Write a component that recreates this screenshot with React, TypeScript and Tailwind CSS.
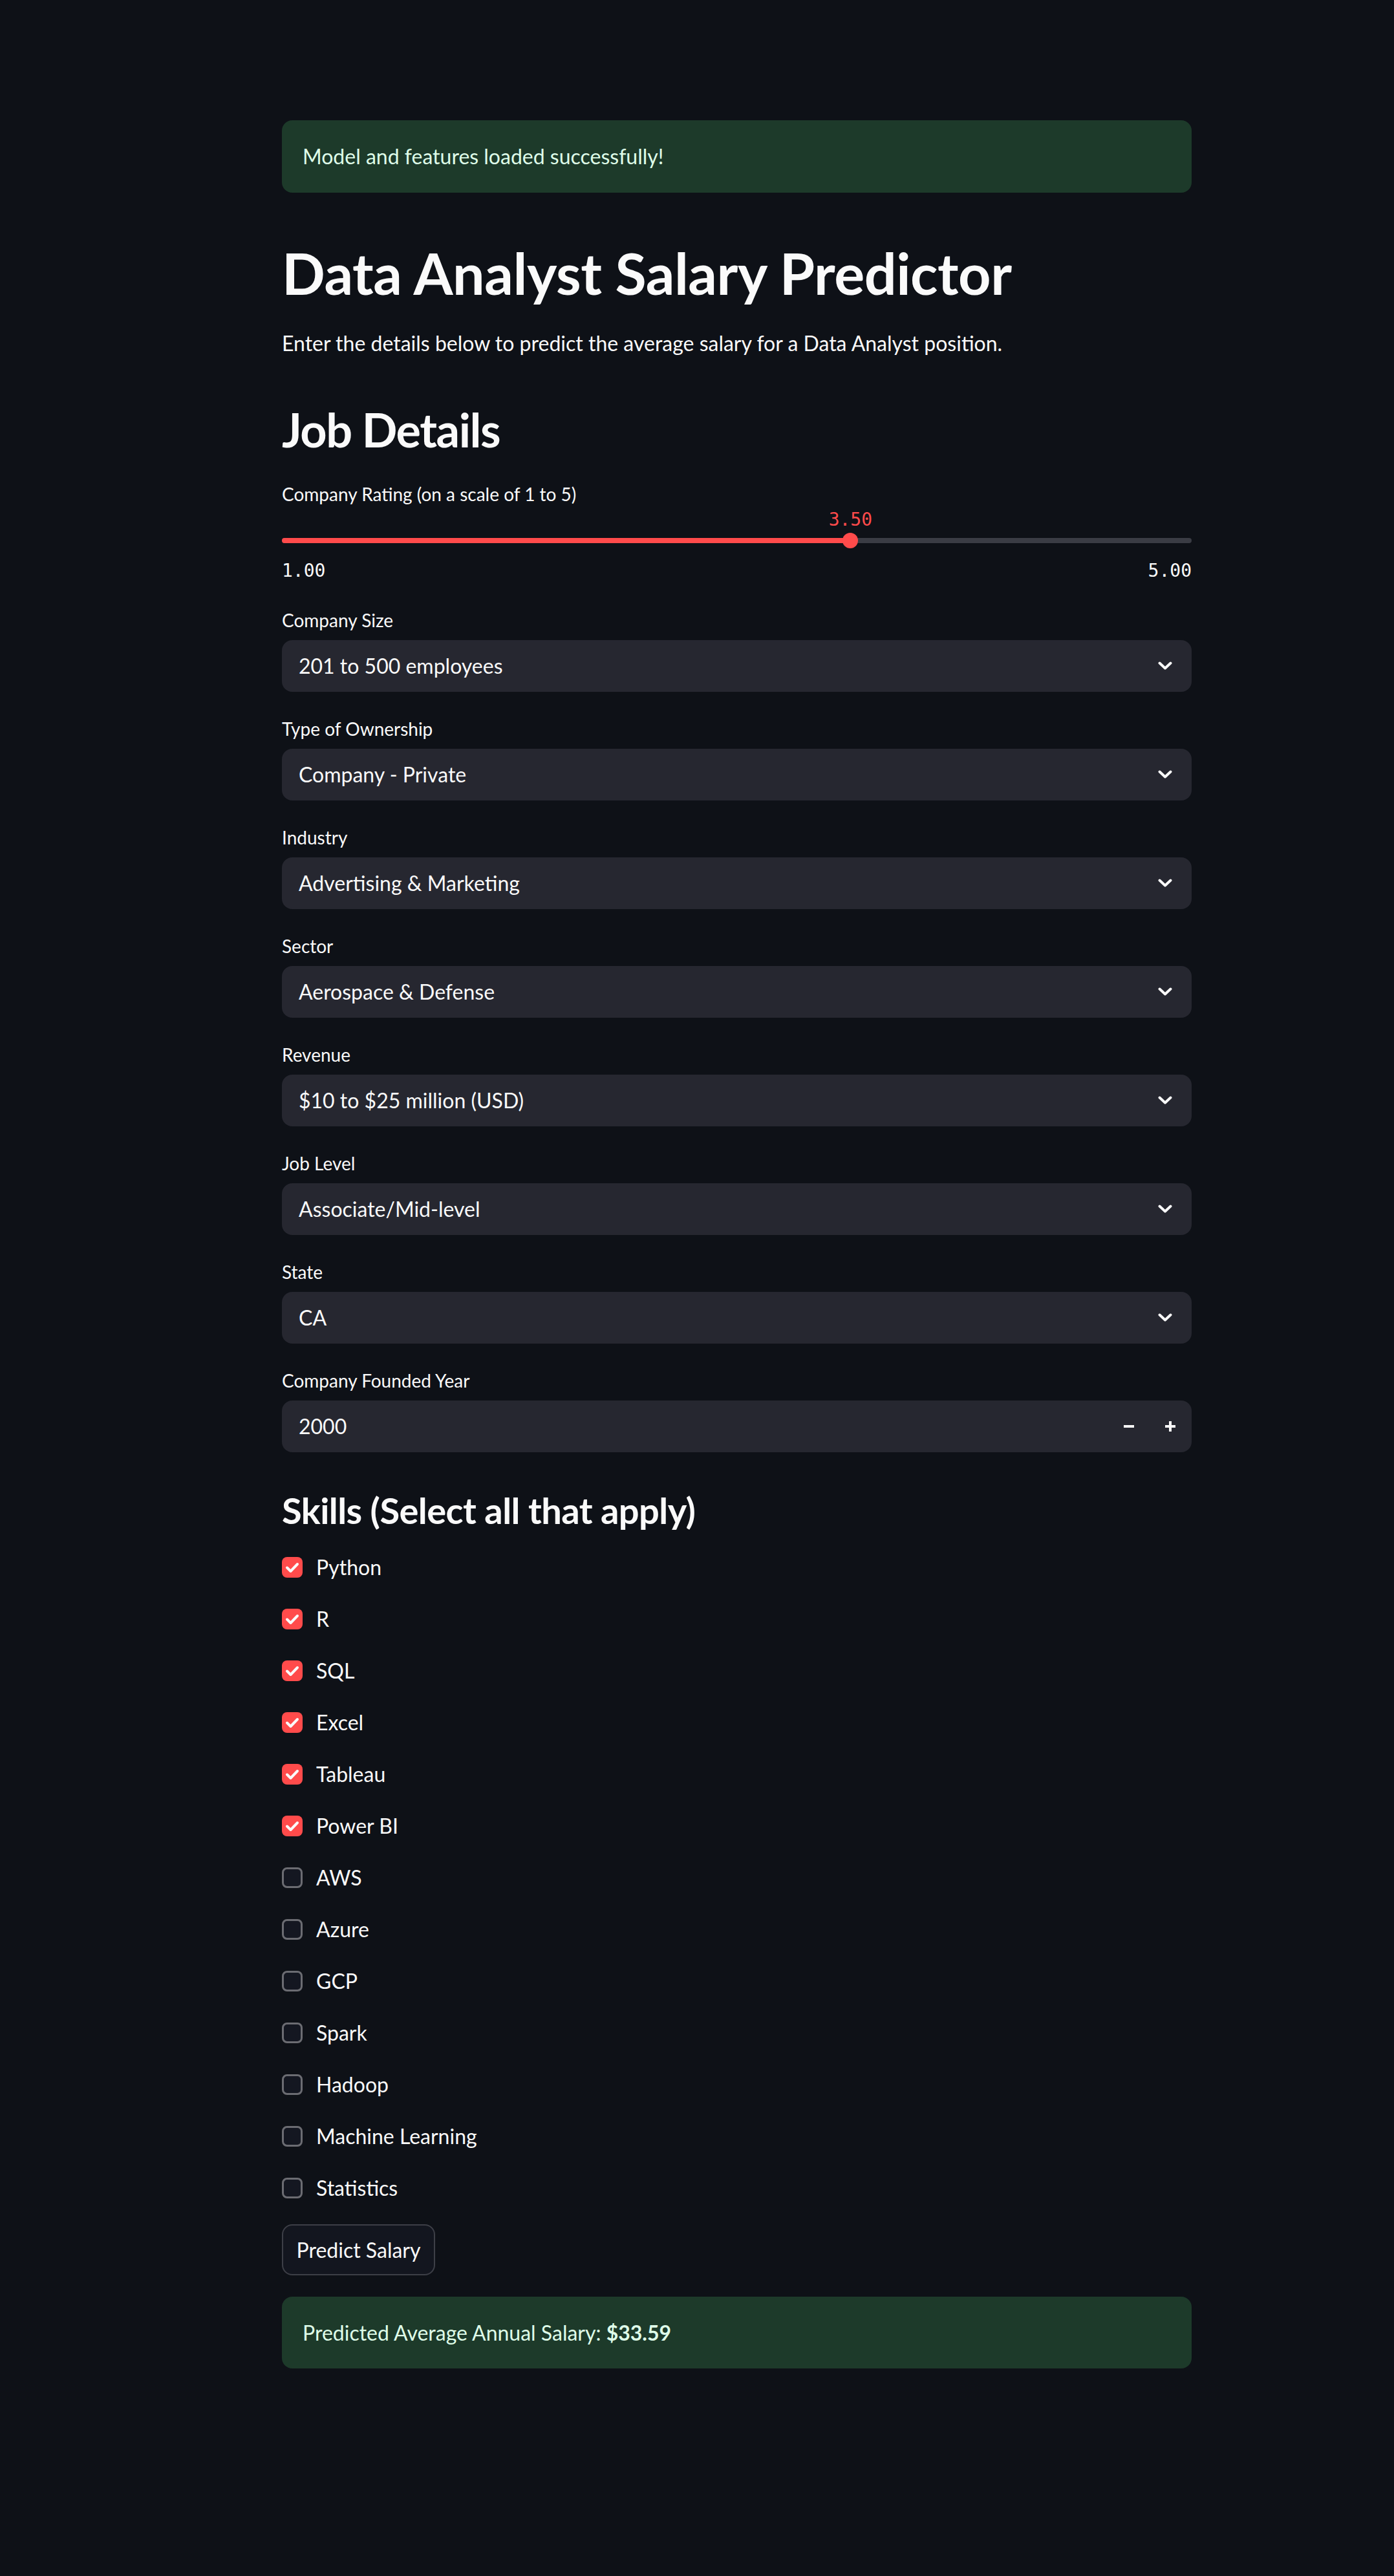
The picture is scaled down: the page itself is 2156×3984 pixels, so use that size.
import React from "react";

const selects: [string, string][] = [
  ["Company Size", "201 to 500 employees"],
  ["Type of Ownership", "Company - Private"],
  ["Industry", "Advertising & Marketing"],
  ["Sector", "Aerospace & Defense"],
  ["Revenue", "$10 to $25 million (USD)"],
  ["Job Level", "Associate/Mid-level"],
  ["State", "CA"],
];

const skills: [string, boolean][] = [
  ["Python", true],
  ["R", true],
  ["SQL", true],
  ["Excel", true],
  ["Tableau", true],
  ["Power BI", true],
  ["AWS", false],
  ["Azure", false],
  ["GCP", false],
  ["Spark", false],
  ["Hadoop", false],
  ["Machine Learning", false],
  ["Statistics", false],
];

function Label({ children }: { children: React.ReactNode }) {
  return <div className="h-[40px] text-[28px] leading-[40px] text-[#fafafa]">{children}</div>;
}

function Chevron() {
  return (
    <svg width="22" height="14" viewBox="0 0 22 14" fill="none">
      <path d="M2.5 2.5 L11 10.5 L19.5 2.5" stroke="#fafafa" strokeWidth="4" strokeLinecap="round" strokeLinejoin="round" />
    </svg>
  );
}

function Checkbox({ checked }: { checked: boolean }) {
  if (checked) {
    return (
      <div className="flex size-[32px] items-center justify-center rounded-[8px] bg-[#ff4b4b]">
        <svg width="24" height="24" viewBox="0 0 24 24" fill="none">
          <path d="M4 12.5 L9.5 18 L20 7" stroke="#fafafa" strokeWidth="4" strokeLinecap="round" strokeLinejoin="round" />
        </svg>
      </div>
    );
  }
  return <div className="size-[32px] rounded-[8px] border-[3px] border-[#6b6c72] bg-[#141721]" />;
}

export default function App() {
  return (
    <div className="min-h-[3984px] w-full bg-[#0e1117] font-['Lato','Noto_Sans',sans-serif] text-[#fafafa]">
      <div className="ml-[436px] flex w-[1407px] flex-col pt-[186px] pb-[200px]">
        {/* loaded message */}
        <div className="flex h-[112px] items-center rounded-[16px] bg-[#1d3a2a] px-[32px] text-[32px] text-[#dffde9]">
          Model and features loaded successfully!
        </div>

        <h1 className="mt-[71px] text-[88px] font-bold leading-[106px] tracking-[-0.005em]">Data Analyst Salary Predictor</h1>
        <p className="mt-[30px] text-[32px] leading-[51px]">
          Enter the details below to predict the average salary for a Data Analyst position.
        </p>

        <h2 className="mt-[65px] text-[72px] font-bold leading-[86px] tracking-[-0.02em]">Job Details</h2>

        <div className="mt-[37px]">
          <Label>Company Rating (on a scale of 1 to 5)</Label>
        </div>

        {/* slider */}
        <div className="relative h-[40px]">
          <span className="absolute left-[62.5%] top-0 -translate-x-1/2 font-['DejaVu_Sans_Mono',monospace] text-[28px] leading-[40px] text-[#ff4b4b]">
            3.50
          </span>
        </div>
        <div className="relative flex h-[24px] items-center">
          <div className="h-[8px] w-full rounded-full bg-[#3a3c44]">
            <div className="h-full w-[62.5%] rounded-full bg-[#ff4b4b]" />
          </div>
          <div className="absolute left-[62.5%] top-0 size-[24px] -translate-x-1/2 rounded-full bg-[#ff4b4b]" />
        </div>
        <div className="mt-[15px] flex h-[40px] justify-between font-['DejaVu_Sans_Mono',monospace] text-[28px] leading-[40px]">
          <span>1.00</span>
          <span>5.00</span>
        </div>

        {selects.map(([label, value], i) => (
          <div key={label} className={i === 0 ? "mt-[36px] flex flex-col" : "mt-[37px] flex flex-col"}>
            <Label>{label}</Label>
            <div className="mt-[11px] flex h-[80px] items-center justify-between rounded-[16px] bg-[#262730] pl-[26px] pr-[30px] text-[32px]">
              <span>{value}</span>
              <Chevron />
            </div>
          </div>
        ))}

        <div className="mt-[37px] flex flex-col">
          <Label>Company Founded Year</Label>
          <div className="mt-[11px] flex h-[80px] items-center justify-between rounded-[16px] bg-[#262730] pl-[26px] pr-[25px] text-[32px]">
            <span>2000</span>
            <div className="flex items-center gap-[48px]">
              <div className="h-[4px] w-[16px] bg-[#fafafa]" />
              <div className="relative size-[16px]">
                <div className="absolute left-0 top-[6px] h-[4px] w-[16px] bg-[#fafafa]" />
                <div className="absolute left-[6px] top-0 h-[16px] w-[4px] bg-[#fafafa]" />
              </div>
            </div>
          </div>
        </div>

        <h3 className="mt-[56px] text-[56px] font-bold leading-[67px] tracking-[-0.01em]">Skills (Select all that apply)</h3>

        <div className="mt-[15px] flex flex-col">
          {skills.map(([name, checked]) => (
            <div key={name} className="flex h-[80px] items-center gap-[21px]">
              <Checkbox checked={checked} />
              <span className="text-[32px] leading-[40px]">{name}</span>
            </div>
          ))}
        </div>

        <button className="mt-[16px] flex h-[79px] w-[237px] items-center justify-center rounded-[16px] border-2 border-[#3d3f47] bg-[#13161f] text-[32px] text-[#fafafa]">
          Predict Salary
        </button>

        <div className="mt-[33px] flex h-[111px] items-center rounded-[16px] bg-[#1d3a2a] px-[32px] text-[32px] text-[#dffde9]">
          <span>
            Predicted Average Annual Salary: <span className="font-bold">$33.59</span>
          </span>
        </div>
      </div>
    </div>
  );
}
